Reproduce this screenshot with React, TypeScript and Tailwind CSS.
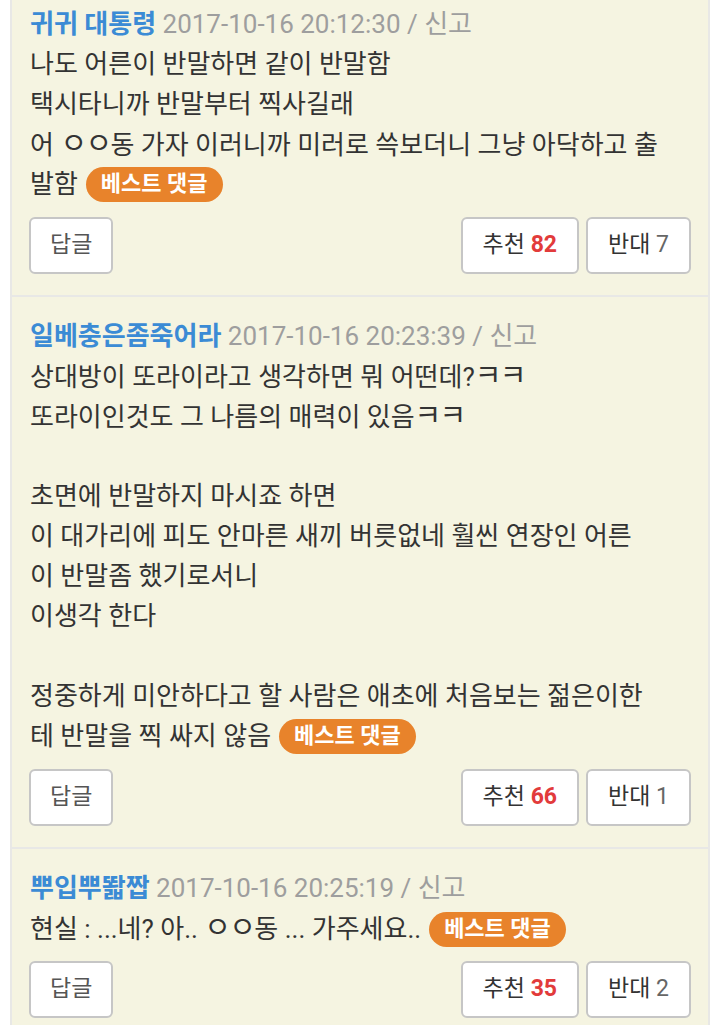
import React from 'react';

type Comment = {
  name: string;
  date: string;
  lines: string[];
  up: number;
  down: number;
};

const comments: Comment[] = [
  {
    name: '귀귀 대통령',
    date: '2017-10-16 20:12:30',
    lines: [
      '나도 어른이 반말하면 같이 반말함',
      '택시타니까 반말부터 찍사길래',
      '어 ㅇㅇ동 가자 이러니까 미러로 쓱보더니 그냥 아닥하고 출',
      '발함',
    ],
    up: 82,
    down: 7,
  },
  {
    name: '일베충은좀죽어라',
    date: '2017-10-16 20:23:39',
    lines: [
      '상대방이 또라이라고 생각하면 뭐 어떤데?ㅋㅋ',
      '또라이인것도 그 나름의 매력이 있음ㅋㅋ',
      '',
      '초면에 반말하지 마시죠 하면',
      '이 대가리에 피도 안마른 새끼 버릇없네 훨씬 연장인 어른',
      '이 반말좀 했기로서니',
      '이생각 한다',
      '',
      '정중하게 미안하다고 할 사람은 애초에 처음보는 젊은이한',
      '테 반말을 찍 싸지 않음',
    ],
    up: 66,
    down: 1,
  },
  {
    name: '뿌입뿌똷짭',
    date: '2017-10-16 20:25:19',
    lines: ['현실 : ...네? 아.. ㅇㅇ동 ... 가주세요..'],
    up: 35,
    down: 2,
  },
];

// jamo like ㅋ and ㅇ take a full cell in the reference
const renderLine = (line: string) =>
  line.split(/([ㅇㅋ])/).map((part, i) =>
    part === 'ㅇ' || part === 'ㅋ' ? (
      <span key={i} className="inline-block w-[25px] text-center text-[29px]">
        {part}
      </span>
    ) : (
      <React.Fragment key={i}>{part}</React.Fragment>
    )
  );

const CommentCard = ({ c }: { c: Comment }) => (
  <div className="border-b-2 border-[#e8e8e6] pt-[19px] pb-[21px] pl-[18px] pr-[17px]">
    <div className="text-[26px] leading-[40px] whitespace-nowrap">
      <span className="font-bold text-[#3b8bd5]">{c.name}</span>{' '}
      <span className="text-[#9e9e9e]">{c.date} / 신고</span>
    </div>
    <div className="text-[26px] leading-[40px] text-[#333]">
      {c.lines.map((line, i) => (
        <div key={i} className="h-[40px] whitespace-pre">
          {renderLine(line)}
          {i === c.lines.length - 1 && (
            <span className="relative -top-[2px] ml-[8px] inline-flex h-[35px] items-center rounded-full bg-[#e8832b] px-[15px] align-middle text-[22px] font-bold text-white">
              베스트 댓글
            </span>
          )}
        </div>
      ))}
    </div>
    <div className="mt-[13px] flex items-center">
      <button className="-ml-[1px] h-[57px] rounded-md border-2 border-[#c6c6c6] bg-white px-[19px] text-[23px] text-[#555]">
        답글
      </button>
      <div className="ml-auto flex gap-[7px]">
        <button className="h-[57px] rounded-md border-2 border-[#c6c6c6] bg-white px-[20px] text-[23px] text-[#333]">
          추천 <span className="font-bold text-[#e23b3b]">{c.up}</span>
        </button>
        <button className="h-[57px] rounded-md border-2 border-[#c6c6c6] bg-white px-[20px] text-[23px] text-[#333]">
          반대 <span className="text-[#666]">{c.down}</span>
        </button>
      </div>
    </div>
  </div>
);

export default function App() {
  return (
    <div className="h-[1025px] overflow-hidden bg-white font-[Roboto,'Noto_Sans_CJK_KR',sans-serif]">
      <div className="mx-[10px] -mt-[15px] border-x-2 border-[#e8e8e6] bg-[#f5f4e1]">
        {comments.map((c) => (
          <CommentCard key={c.name} c={c} />
        ))}
      </div>
    </div>
  );
}
